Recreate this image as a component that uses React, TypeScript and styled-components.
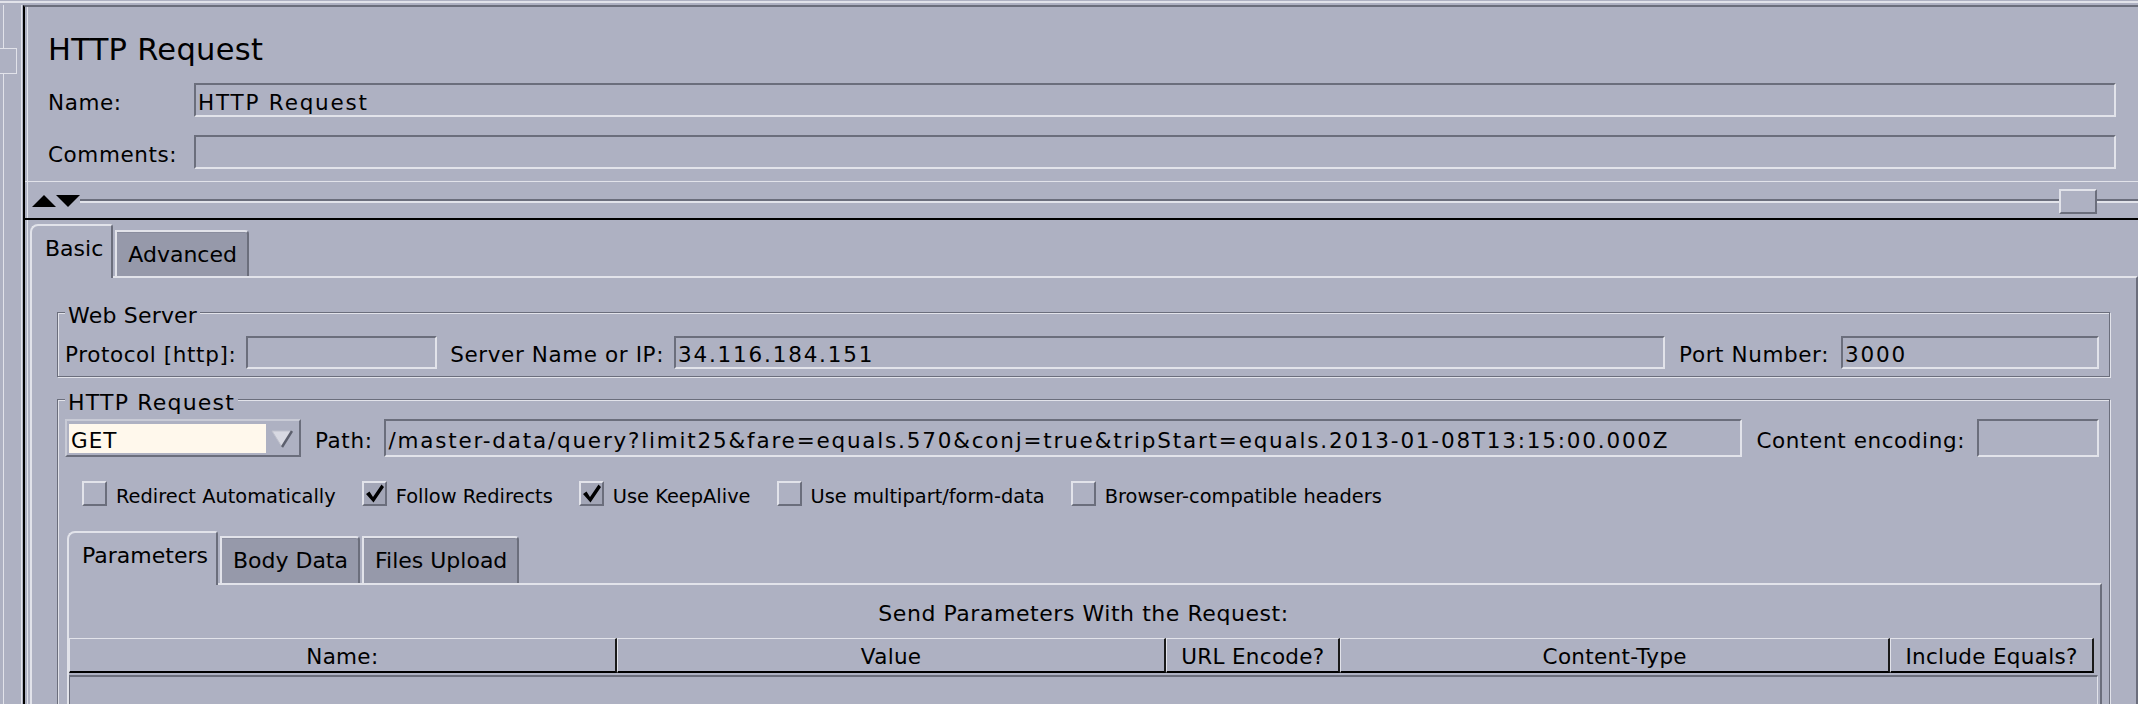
import React from 'react';
import styled, { createGlobalStyle } from 'styled-components';

const C = {
  bg: '#aeb1c2',
  tab: '#9699aa',
  light: '#e2e3ea',
  mid: '#c9cbd6',
  dark: '#6b6e7c',
  cream: '#fff8ec',
};

const Global = createGlobalStyle`
  html, body { margin: 0; padding: 0; background: ${C.bg}; }
  body { font-family: "DejaVu Sans", "Liberation Sans", sans-serif; color: #000; overflow: hidden; }
  * { box-sizing: border-box; }
`;

const Root = styled.div`
  width: 2138px;
  height: 704px;
  overflow: hidden;
  display: flex;
  flex-direction: column;
  background: ${C.bg};
`;

const TopEdge = styled.div`
  flex: none;
  height: 2px;
  margin: 1px 0 2px;
  background: ${C.light};
`;

const Body = styled.div`
  flex: 1;
  min-height: 0;
  display: flex;
`;

const LeftStrip = styled.div`
  flex: none;
  width: 23px;
  padding-top: 43px;
  background:
    linear-gradient(${C.light}, ${C.light}) 3px 0 / 1px 100% no-repeat,
    linear-gradient(${C.light}, ${C.light}) 21px 0 / 1px 100% no-repeat;
`;

const DividerThumb = styled.div`
  width: 17px;
  height: 26px;
  border: 1px solid ${C.light};
  border-left: none;
  background: ${C.bg};
`;

const MainPanel = styled.div`
  flex: 1;
  min-width: 0;
  display: flex;
  flex-direction: column;
  border-left: 2px solid #000;
  border-top: 2px solid ${C.dark};
  box-shadow: inset 2px 0 0 ${C.bg}, inset 3px 0 0 ${C.light};
`;

const Header = styled.div`
  padding: 0 22px 0 23px;
`;

const Title = styled.h1`
  margin: 25px 0 0;
  font-size: 30.5px;
  font-weight: normal;
  line-height: 36px;
  letter-spacing: 0.3px;
`;

const FieldRow = styled.div<{ $mt: number }>`
  display: grid;
  grid-template-columns: 146px 1fr;
  align-items: center;
  margin-top: ${(p) => p.$mt}px;
`;

const Label = styled.span<{ $mr?: number }>`
  flex: none;
  font-size: 21.5px;
  letter-spacing: 0.6px;
  padding-top: 4px;
  white-space: nowrap;
  margin-right: ${(p) => p.$mr ?? 0}px;
`;

const TextField = styled.div<{ $w?: number; $h: number; $mr?: number }>`
  height: ${(p) => p.$h}px;
  flex: ${(p) => (p.$w ? 'none' : '1')};
  width: ${(p) => (p.$w ? `${p.$w}px` : 'auto')};
  min-width: 0;
  margin-right: ${(p) => p.$mr ?? 0}px;
  border: 2px solid;
  border-color: ${C.dark} ${C.light} ${C.light} ${C.dark};
  padding: 4px 2px 0;
  display: flex;
  align-items: center;
  font-size: 21.5px;
  letter-spacing: 1.8px;
  white-space: nowrap;
  overflow: hidden;
`;

const Separator = styled.div`
  flex: none;
  height: 1px;
  margin-top: 12px;
  background: ${C.light};
`;

const SplitterRow = styled.div`
  flex: none;
  height: 36px;
  padding: 2px 0 0 7px;
  display: flex;
  align-items: center;
`;

const SplitLine = styled.div<{ $w?: number }>`
  flex: ${(p) => (p.$w ? 'none' : '1')};
  width: ${(p) => (p.$w ? `${p.$w}px` : 'auto')};
  height: 4px;
  border-top: 2px solid ${C.dark};
  border-bottom: 2px solid ${C.light};
`;

const SplitThumb = styled.div`
  flex: none;
  width: 38px;
  height: 25px;
  border: 2px solid;
  border-color: ${C.light} ${C.dark} ${C.dark} ${C.light};
`;

const BlackRule = styled.div`
  flex: none;
  height: 2px;
  background: #000;
`;

const TabStrip = styled.div<{ $pt: number; $ml: number; $mt?: number }>`
  flex: none;
  display: flex;
  align-items: flex-end;
  gap: 2px;
  padding-top: ${(p) => p.$pt}px;
  margin-left: ${(p) => p.$ml}px;
  margin-top: ${(p) => p.$mt ?? 0}px;
`;

const Tab = styled.div<{ $active?: boolean; $h: number }>`
  flex: none;
  height: ${(p) => p.$h}px;
  font-size: 22px;
  line-height: 26px;
  white-space: nowrap;
  border-top: 2px solid ${C.light};
  border-left: 2px solid ${C.light};
  border-right: 2px solid ${C.dark};
  ${(p) =>
    p.$active
      ? `
    background: ${C.bg};
    border-top-left-radius: 8px;
    border-top-right-radius: 3px;
    margin-bottom: -2px;
    position: relative;
    z-index: 1;
    padding: 10px 8px 0 13px;
  `
      : `
    background: ${C.tab};
    border-top-right-radius: 4px;
    box-shadow: inset 0 1px 0 #8a8d9e;
    padding: 10px 10px 0 11px;
  `}
`;

const TabPanel = styled.div`
  flex: 1;
  min-height: 0;
  margin-left: 5px;
  border-top: 2px solid ${C.light};
  border-left: 2px solid ${C.light};
  border-right: 2px solid ${C.dark};
  padding: 0 26px 0 25px;
`;

const GroupBox = styled.div<{ $mt: number; $pr: number }>`
  margin-top: ${(p) => p.$mt}px;
  border: 1px solid ${C.dark};
  box-shadow: inset 1px 1px 0 ${C.light}, 1px 1px 0 ${C.light};
  padding: 0 ${(p) => p.$pr}px 7px 7px;
`;

const GroupTitle = styled.div<{ $ls: number }>`
  width: fit-content;
  margin: -9px 0 0 0;
  padding: 0 3px;
  background: ${C.bg};
  font-size: 22px;
  line-height: 24px;
  letter-spacing: ${(p) => p.$ls}px;
  white-space: nowrap;
`;

const Row = styled.div<{ $mt: number; $h: number; $mr?: number }>`
  display: flex;
  align-items: center;
  height: ${(p) => p.$h}px;
  margin-top: ${(p) => p.$mt}px;
  margin-right: ${(p) => p.$mr ?? 0}px;
`;

const Combo = styled.div`
  flex: none;
  width: 236px;
  height: 38px;
  display: flex;
  margin-right: 14px;
  border: 2px solid;
  border-color: ${C.mid} ${C.dark} ${C.dark} ${C.mid};
  padding: 3px 1px 2px 2px;
`;

const ComboValue = styled.div`
  flex: 1;
  background: ${C.cream};
  font-size: 21.5px;
  letter-spacing: 1px;
  padding: 3px 0 0 2px;
  display: flex;
  align-items: center;
`;

const ComboArrow = styled.div`
  flex: none;
  width: 32px;
  display: flex;
  align-items: center;
  justify-content: center;
`;

const CheckRow = styled.div`
  display: flex;
  align-items: center;
  gap: 26px;
  height: 25px;
  margin: 24px 0 0 17px;
`;

const CheckItem = styled.div`
  display: flex;
  align-items: center;
  gap: 9px;
`;

const CheckBox = styled.span<{ $checked?: boolean }>`
  flex: none;
  width: 25px;
  height: 25px;
  border: 2px solid;
  border-color: ${C.light} ${C.dark} ${C.dark} ${C.light};
  background: ${(p) => (p.$checked ? '#a3a6b7' : 'transparent')};
  display: flex;
  align-items: center;
  justify-content: center;
`;

const CheckText = styled.span`
  font-size: 19.4px;
  padding-top: 5px;
  white-space: nowrap;
`;

const SubPanel = styled.div`
  margin-left: 2px;
  border-top: 2px solid ${C.light};
  border-left: 2px solid ${C.light};
  border-right: 2px solid ${C.dark};
  padding: 0 2px 0 0;
`;

const Caption = styled.div`
  margin-top: 16px;
  font-size: 22px;
  letter-spacing: 0.55px;
  line-height: 26px;
  text-align: center;
`;

const HeaderRow = styled.div`
  display: grid;
  grid-template-columns: 548fr 550fr 174fr 550fr 204fr;
  margin: 11px 4px 0 0;
`;

const HeaderCell = styled.div`
  height: 35px;
  border-top: 1px solid ${C.light};
  border-left: 1px solid ${C.light};
  border-right: 2px solid #1a1a1a;
  border-bottom: 2px solid #000;
  padding-top: 3px;
  font-size: 21.5px;
  letter-spacing: 0.3px;
  line-height: 29px;
  text-align: center;
  white-space: nowrap;
  overflow: hidden;
`;

const DataArea = styled.div`
  height: 300px;
  margin-top: 2px;
  border-top: 2px solid ${C.dark};
  border-left: 1px solid ${C.dark};
  border-right: 1px solid ${C.light};
`;

const SplitArrows = () => (
  <svg width="48" height="12" viewBox="0 0 48 12" style={{ flex: 'none' }}>
    <polygon points="0,12 12,0 24,12" fill="#000" />
    <polygon points="24,0 48,0 36,12" fill="#000" />
  </svg>
);

const ComboTriangle = () => (
  <svg width="22" height="18" viewBox="0 0 22 18">
    <polygon points="1,1 21,1 11,17" fill="#d8d9e2" stroke="#bfc1cc" strokeWidth="1" />
    <line x1="21" y1="1" x2="11" y2="17" stroke="#5c5f6d" strokeWidth="2.5" />
  </svg>
);

const CheckMark = () => (
  <svg width="21" height="21" viewBox="0 0 21 21">
    <path d="M2 11 L5.5 8.5 L9 14 L17.5 1.5 L20 4 L9.5 19.5 Z" fill="#000" />
  </svg>
);

const checks = [
  { label: 'Redirect Automatically', on: false },
  { label: 'Follow Redirects', on: true },
  { label: 'Use KeepAlive', on: true },
  { label: 'Use multipart/form-data', on: false },
  { label: 'Browser-compatible headers', on: false },
];

const columns = ['Name:', 'Value', 'URL Encode?', 'Content-Type', 'Include Equals?'];

export default function App() {
  return (
    <Root>
      <Global />
      <TopEdge />
      <Body>
        <LeftStrip>
          <DividerThumb />
        </LeftStrip>
        <MainPanel>
          <Header>
            <Title>HTTP Request</Title>
            <FieldRow $mt={15}>
              <Label>Name:</Label>
              <TextField $h={34}>HTTP Request</TextField>
            </FieldRow>
            <FieldRow $mt={18}>
              <Label>Comments:</Label>
              <TextField $h={34} />
            </FieldRow>
          </Header>
          <Separator />
          <SplitterRow>
            <SplitArrows />
            <SplitLine />
            <SplitThumb />
            <SplitLine $w={41} />
          </SplitterRow>
          <BlackRule />
          <TabStrip $pt={4} $ml={5}>
            <Tab $active $h={54}>Basic</Tab>
            <Tab $h={46}>Advanced</Tab>
          </TabStrip>
          <TabPanel>
            <GroupBox $mt={34} $pr={10}>
              <GroupTitle $ls={0.2}>Web Server</GroupTitle>
              <Row $mt={8} $h={33}>
                <Label $mr={10}>Protocol [http]:</Label>
                <TextField $h={33} $w={191} $mr={13} />
                <Label $mr={10}>Server Name or IP:</Label>
                <TextField $h={33} $mr={14}>34.116.184.151</TextField>
                <Label $mr={12}>Port Number:</Label>
                <TextField $h={33} $w={258}>3000</TextField>
              </Row>
            </GroupBox>
            <GroupBox $mt={22} $pr={7}>
              <GroupTitle $ls={1.2}>HTTP Request</GroupTitle>
              <Row $mt={4} $h={38} $mr={3}>
                <Combo>
                  <ComboValue>GET</ComboValue>
                  <ComboArrow>
                    <ComboTriangle />
                  </ComboArrow>
                </Combo>
                <Label $mr={12}>Path:</Label>
                <TextField $h={38} $mr={14}>
                  /master-data/query?limit25&amp;fare=equals.570&amp;conj=true&amp;tripStart=equals.2013-01-08T13:15:00.000Z
                </TextField>
                <Label $mr={12}>Content encoding:</Label>
                <TextField $h={38} $w={122} />
              </Row>
              <CheckRow>
                {checks.map((c) => (
                  <CheckItem key={c.label}>
                    <CheckBox $checked={c.on}>{c.on && <CheckMark />}</CheckBox>
                    <CheckText>{c.label}</CheckText>
                  </CheckItem>
                ))}
              </CheckRow>
              <TabStrip $pt={0} $ml={2} $mt={25}>
                <Tab $active $h={54}>Parameters</Tab>
                <Tab $h={47}>Body Data</Tab>
                <Tab $h={47}>Files Upload</Tab>
              </TabStrip>
              <SubPanel>
                <Caption>Send Parameters With the Request:</Caption>
                <HeaderRow>
                  {columns.map((c) => (
                    <HeaderCell key={c}>{c}</HeaderCell>
                  ))}
                </HeaderRow>
                <DataArea />
              </SubPanel>
            </GroupBox>
          </TabPanel>
        </MainPanel>
      </Body>
    </Root>
  );
}
